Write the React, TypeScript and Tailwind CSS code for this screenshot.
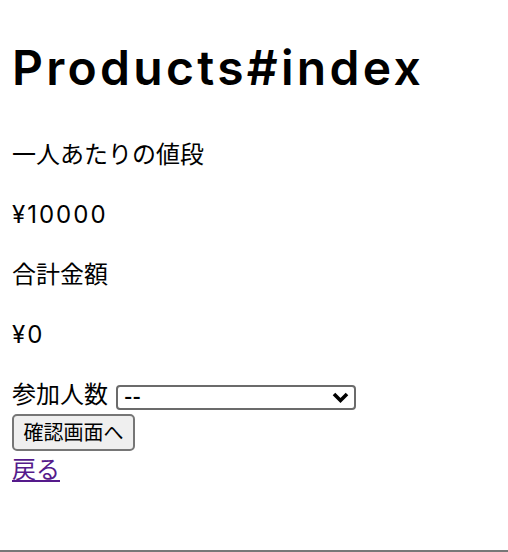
export default function App() {
  return (
    <div
      className="relative h-[552px] w-[508px] overflow-hidden bg-white px-3 text-black"
      style={{ fontFamily: 'Inter, "Noto Sans CJK JP", sans-serif' }}
    >
      <h1 className="pt-[32px] text-[48px] font-semibold leading-[72px] tracking-[3.3px]">
        Products#index
      </h1>
      <p className="mt-[32px] pt-[2px] text-[24px] leading-[34px]">一人あたりの値段</p>
      <p className="mt-[24px] pt-[2px] text-[24px] leading-[34px] tracking-[2px]">¥10000</p>
      <p className="mt-[24px] pt-[2px] text-[24px] leading-[34px]">合計金額</p>
      <p className="mt-[24px] pt-[2px] text-[24px] leading-[34px] tracking-[2px]">¥0</p>

      <form className="mt-[24px]">
        <div className="flex items-center gap-2 pt-[2px] text-[24px] leading-[34px]">
          <label>参加人数</label>
          <div className="relative mt-[4px] h-[25px] w-[240px] rounded-[4px] border-2 border-[#6b6b6b] bg-white">
            <span className="absolute left-[6px] top-[-7px] text-[18px] font-bold">--</span>
            <svg
              className="absolute right-[5px] top-[5px]"
              width="17"
              height="12"
              viewBox="0 0 17 12"
            >
              <path d="M2 2 L8.5 8.5 L15 2" fill="none" stroke="#000" strokeWidth="3.6" />
            </svg>
          </div>
        </div>
        <button
          type="button"
          className="mt-[2px] flex h-[37px] w-[123px] items-center justify-center rounded-[5px] border-2 border-[#767676] bg-[#efefef] text-[20px]"
        >
          確認画面へ
        </button>
        <a href="#" className="block pt-[2px] text-[24px] leading-[34px] text-[#551a8b] underline">
          戻る
        </a>
      </form>

      <div className="absolute bottom-0 left-0 h-[2px] w-full bg-[#777]" />
    </div>
  );
}
